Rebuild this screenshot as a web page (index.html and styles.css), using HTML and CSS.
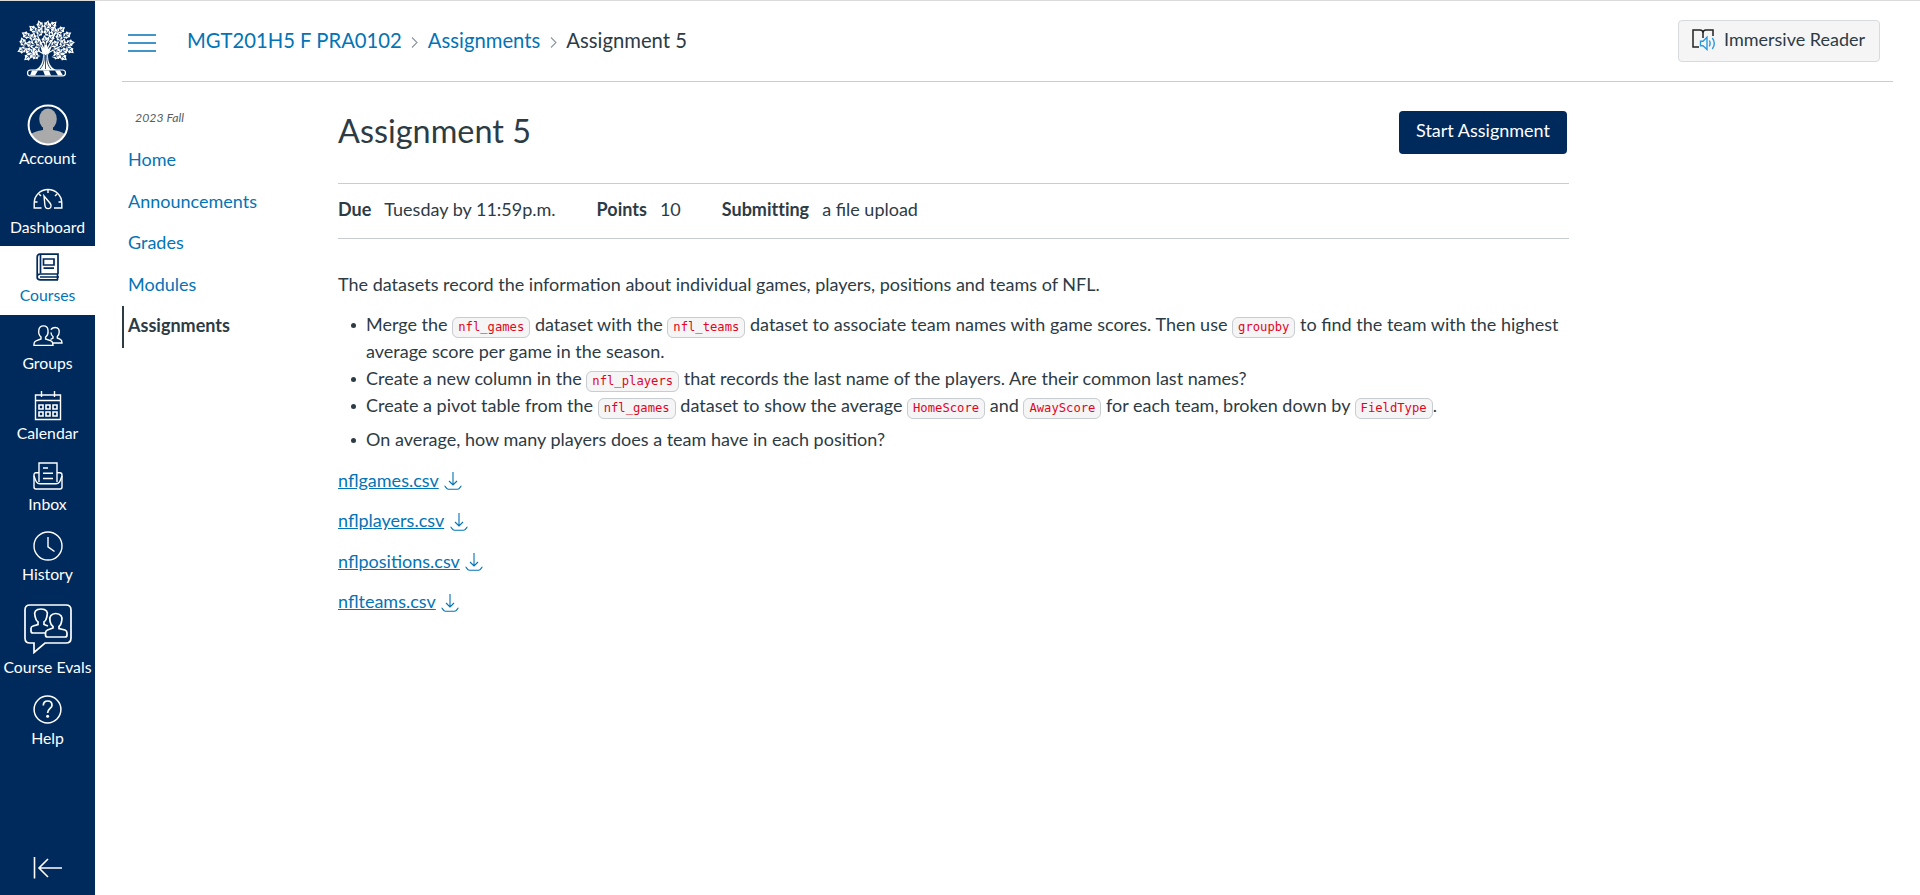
FILE: index.html
```html
<!DOCTYPE html>
<html lang="en">
<head>
<meta charset="utf-8">
<title>Assignment 5</title>
<link rel="stylesheet" href="styles.css">
</head>
<body>
<svg class="defs" width="0" height="0">
  <defs>
    <g id="leaf"><path d="M0 5.5 L-1.6 3 L-3.2 2.5 L-2.6 .3 L-3.4-1.6 L-1.6-2.4 L0-5 L1.7-2.4 L3.4-1.5 L2.6 .4 L3.2 2.5 L1.6 3Z" fill="#fff"/><path d="M0 5V-2.5M0 2L-1.7 .2M0 2L1.7 .2" stroke="#002a5c" stroke-width=".7" fill="none"/></g>
    <symbol id="download" viewBox="0 0 18 18"><path d="M9 0V13M5 9L9 13L13 9M.5 14C1.6 14 2 17.3 4.5 17.3H13.5C16 17.3 16.4 14 17.5 14" fill="none" stroke="currentColor" stroke-width="1.1"/></symbol>
  </defs>
</svg>
<div class="app">
  <nav class="rail">
    <a class="logo"><svg width="58" height="58" viewBox="0 0 58 58">
      <path d="M23 26L26 36C26 43 24 48 18 51H39C33 48 31 43 31 36L36 25L31 30L28 18L27 30Z" fill="#fff"/>
      <path d="M27 35C28 42 26 47 23 50M30 34C29 42 31 47 34 50M28.5 36V50" fill="none" stroke="#002a5c" stroke-width=".8"/>
      <path d="M27 35L14 28M29 35L44 27M27 30L20 16M30 30L38 15" stroke="#fff" stroke-width="1.3"/>
      <use href="#leaf" transform="translate(23 6)rotate(-20)"/><use href="#leaf" transform="translate(30 6)rotate(15)"/><use href="#leaf" transform="translate(36 6)rotate(45)"/>
      <use href="#leaf" transform="translate(16 10)rotate(-50)"/><use href="#leaf" transform="translate(23 13)rotate(25)"/><use href="#leaf" transform="translate(30 13)rotate(-30)"/><use href="#leaf" transform="translate(37 12)rotate(10)"/><use href="#leaf" transform="translate(44 11)rotate(55)"/>
      <use href="#leaf" transform="translate(9 16)rotate(-60)"/><use href="#leaf" transform="translate(16 18)rotate(15)"/><use href="#leaf" transform="translate(28 21)rotate(-10)"/><use href="#leaf" transform="translate(34 19)rotate(35)"/><use href="#leaf" transform="translate(42 18)rotate(-20)"/><use href="#leaf" transform="translate(50 16)rotate(60)"/>
      <use href="#leaf" transform="translate(6 23)rotate(-20)"/><use href="#leaf" transform="translate(13 25)rotate(-80)"/><use href="#leaf" transform="translate(21 23)rotate(-30)"/><use href="#leaf" transform="translate(38 25)rotate(60)"/><use href="#leaf" transform="translate(46 24)rotate(20)"/><use href="#leaf" transform="translate(53 24)rotate(80)"/>
      <use href="#leaf" transform="translate(5 31)rotate(-110)"/><use href="#leaf" transform="translate(12 32)rotate(-60)"/><use href="#leaf" transform="translate(19 31)rotate(-130)"/><use href="#leaf" transform="translate(40 32)rotate(110)"/><use href="#leaf" transform="translate(47 32)rotate(60)"/><use href="#leaf" transform="translate(53 31)rotate(130)"/>
      <use href="#leaf" transform="translate(11 38)rotate(-130)"/><use href="#leaf" transform="translate(18 37)rotate(-90)"/><use href="#leaf" transform="translate(40 37)rotate(80)"/><use href="#leaf" transform="translate(46 38)rotate(130)"/>
      <rect x="10.5" y="51" width="38" height="6" rx="3" fill="#002a5c" stroke="#fff" stroke-width="1.2"/>
      <path d="M15 51.5L21 51.5L18 56.5L13 56.5ZM26 51.5H32L34 56.5H28ZM38 51.5H43L46 56.5H41Z" fill="#fff"/>
    </svg></a>
    <a class="item account"><span class="icon"><svg width="42" height="42" viewBox="0 0 42 42"><defs><clipPath id="face"><circle cx="21" cy="21" r="19"/></clipPath></defs><circle cx="21" cy="21" r="19.5" fill="#002a5c"/><g clip-path="url(#face)" fill="#aaa"><ellipse cx="21" cy="15" rx="8.8" ry="10.5"/><path d="M16 22H26V26C33 27 39 29 40 34V42H2V34C3 29 9 27 16 26Z"/></g><circle cx="21" cy="21" r="19.4" fill="none" stroke="#fff" stroke-width="2"/></svg></span><span class="label">Account</span></a>
    <a class="item dashboard"><span class="icon"><svg width="30" height="22" viewBox="0 0 30 22"><g fill="none" stroke="#fff" stroke-width="1.4"><path d="M8.5 20H1.2V15A13.8 13.5 0 0 1 28.8 15V20H21"/><path d="M15 2V5M6 6L8 8M24 6L22 8M2 14H4.5M25.5 14H28"/><path d="M11 8L17.3 15.5C19 18 17.8 20.5 15.2 20.6C12.8 20.6 12 19 11.9 17Z"/></g></svg></span><span class="label">Dashboard</span></a>
    <a class="item active"><span class="icon"><svg width="24" height="28" viewBox="0 0 24 28"><g fill="none" stroke="#002a5c" stroke-width="1.7"><path d="M22 21H4.5C0 21 0 26.8 4.5 26.8H22M22 21V1.2H4C2 1.2 1.2 2.5 1.2 4V24"/><path d="M4.5 2V20.5M7.5 6H18V12H7.5ZM7.5 15.2H18M4 24H23M21.5 21V27"/></g></svg></span><span class="label">Courses</span></a>
    <a class="item raised"><span class="icon"><svg width="30" height="22" viewBox="0 0 30 22"><g fill="none" stroke="#fff" stroke-width="1.4"><path d="M8 12C5.5 10 5.5 7 5.8 5.2C6.2 2 8 .9 10.5.9S14.8 2 15 5.2C15.3 8 15 10.3 12.6 12V14L18 15.8C19.8 16.5 20 17.6 20 20.4H1V19C1 17 1.5 16.3 3 15.8L8 14Z"/><path d="M18 4.8C18.8 2.8 20.5 2.5 22.2 2.5C25.5 2.5 26.3 4.5 26.2 7C26.2 9 25.8 10.3 24.3 11.5V13L27.3 14.3C29 15 29 16 29 18H20M18 7.5C18.1 9.5 18.5 10.5 20 11.5V13L17.5 14.5"/></g></svg></span><span class="label">Groups</span></a>
    <a class="item raised"><span class="icon"><svg width="28" height="30" viewBox="0 0 28 30"><g fill="none" stroke="#fff" stroke-width="1.4"><path d="M1.5 4H26.5V28.5H1.5ZM1.5 9.5H26.5M7.5 0V6M20.5 0V6"/><path d="M5 14H9V18H5ZM12 14H16V18H12ZM19 14H23V18H19ZM5 21H9V25H5ZM12 21H16V25H12ZM19 21H23V25H19Z" stroke-width="1.6"/></g></svg></span><span class="label">Calendar</span></a>
    <a class="item"><span class="icon"><svg width="30" height="28" viewBox="0 0 30 28"><g fill="none" stroke="#fff" stroke-width="1.4"><path d="M6 10.8H3C1.5 10.8 1 11.5 1 13V25C1 26.5 1.6 27 3 27H27C28.4 27 29 26.5 29 25V13C29 11.5 28.5 10.8 27 10.8H24"/><path d="M6 20V1H24V20M1 14C3 20 4 21.8 7 21.8H23C26 21.8 27 20 29 14M10 6H15M10 11.2H20M10 16.5H20"/></g></svg></span><span class="label">Inbox</span></a>
    <a class="item"><span class="icon"><svg width="30" height="30" viewBox="0 0 30 30"><g fill="none" stroke="#fff" stroke-width="1.4"><circle cx="15" cy="15" r="14"/><path d="M15 6V15.8L21.5 20.5"/></g></svg></span><span class="label">History</span></a>
    <a class="item evals"><span class="icon"><svg width="48" height="50" viewBox="0 0 48 50"><g fill="none" stroke="#fff" stroke-width="1.7"><path d="M6 1H42Q47 1 47 6V34Q47 39 42 39H21L10 48.5V39H6Q1 39 1 34V6Q1 1 6 1Z"/><path d="M21.5 29H9Q7 29 7 27V24.5Q7 22.5 9 22L14 20.5V18C11 16 11.5 13 11 12C9.7 8 11.6 5 17 5S24.3 8 23 12C22.5 13 23 16 20 18V20.5L24 22"/><path d="M29 24V22.5C26 20.5 26.5 18 26 17C25 13 27 9.5 31.8 9.5S39 13 37.7 17C37 18 38 20.5 35 22.5V24.5L41 26Q43 26.7 43 29V31Q43 33 41 33H23.5Q21.5 33 21.5 31V29Q21.5 26.7 23.5 26Z"/></g></svg></span><span class="label">Course Evals</span></a>
    <a class="item"><span class="icon"><svg width="30" height="30" viewBox="0 0 30 30"><g fill="none" stroke="#fff"><circle cx="14.5" cy="14.5" r="13.4" stroke-width="1.5"/><path d="M10.3 10.5C10.3 7.5 12 6 14.7 6S19 7.5 19 10.2C19 13.5 14.6 13.5 14.6 18" stroke-width="1.7"/></g><circle cx="14.6" cy="21.2" r="1.5" fill="#fff"/></svg></span><span class="label">Help</span></a>
    <a class="collapse"><svg width="30" height="22" viewBox="0 0 30 22"><path d="M1.5 0V21.5M29 11H6M15 2L6 11L15 20" fill="none" stroke="#fff" stroke-width="1.6"/></svg></a>
  </nav>
  <div class="page">
    <header class="topbar">
      <svg class="burger" width="28" height="18" viewBox="0 0 28 18"><path d="M0 1H28M0 9H28M0 17H28" stroke="#0374b5" stroke-width="1.5"/></svg>
      <div class="crumbs"><a>MGT201H5 F PRA0102</a><svg width="7" height="11" viewBox="0 0 7 11"><path d="M1 .5L6 5.5L1 10.5" fill="none" stroke="#8b969e" stroke-width="1.1"/></svg><a>Assignments</a><svg width="7" height="11" viewBox="0 0 7 11"><path d="M1 .5L6 5.5L1 10.5" fill="none" stroke="#8b969e" stroke-width="1.1"/></svg><span>Assignment 5</span></div>
      <button class="reader"><svg width="24" height="22" viewBox="0 0 24 22"><path d="M7 18H1V1H8Q11 1 11 4V9M11 4Q11 1 14 1H21V7" fill="none" stroke="#222" stroke-width="1.5"/><path d="M8.5 12.2H11L15 8.2V20.5L11 16.8H8.5ZM17.3 11.5Q19 14.2 17.3 17.3M20.3 9Q24.3 14.3 20.3 20" fill="none" stroke="#2b9be0" stroke-width="1.4"/></svg>Immersive Reader</button>
    </header>
    <div class="columns">
      <nav class="course">
        <span class="term">2023 Fall</span>
        <a>Home</a><a>Announcements</a><a>Grades</a><a>Modules</a><a class="current">Assignments</a>
      </nav>
      <main>
        <div class="titlebar"><h1>Assignment 5</h1><button class="start">Start Assignment</button></div>
        <div class="facts"><div><b>Due</b>Tuesday by 11:59p.m.</div><div><b>Points</b>10</div><div><b>Submitting</b>a file upload</div></div>
        <div class="description">
          <p>The datasets record the information about individual games, players, positions and teams of NFL.</p>
          <ul>
            <li>Merge the <code>nfl_games</code> dataset with the <code>nfl_teams</code> dataset to associate team names with game scores. Then use <code>groupby</code> to find the team with the highest average score per game in the season.</li>
            <li>Create a new column in the <code>nfl_players</code> that records the last name of the players. Are their common last names?</li>
            <li>Create a pivot table from the <code>nfl_games</code> dataset to show the average <code>HomeScore</code> and <code>AwayScore</code> for each team, broken down by <code>FieldType</code>.</li>
            <li class="spaced">On average, how many players does a team have in each position?</li>
          </ul>
          <div class="files">
            <div><a>nflgames.csv</a><svg><use href="#download"/></svg></div>
            <div><a>nflplayers.csv</a><svg><use href="#download"/></svg></div>
            <div><a>nflpositions.csv</a><svg><use href="#download"/></svg></div>
            <div><a>nflteams.csv</a><svg><use href="#download"/></svg></div>
          </div>
        </div>
      </main>
    </div>
  </div>
</div>
</body>
</html>
```
FILE: styles.css
```css
* { box-sizing: border-box; }
body { margin: 0; background: #fff; color: #2d3b45; font: 18px/27px Lato, sans-serif; }
.defs { display: block; }
.app { display: flex; height: 895px; border-top: 1px solid #dadada; }
svg { flex: none; }
button { font: inherit; }

.rail { width: 95px; background: #002a5c; display: flex; flex-direction: column; flex: none; }
.logo { height: 97px; padding: 18px 0 0 17px; }
.item { height: 70px; padding-top: 6px; display: flex; flex-direction: column; align-items: center; color: #fff; flex: none; }
.icon { height: 30px; display: flex; align-items: center; }
.label { font-size: 15.75px; line-height: 24px; margin-top: 1px; white-space: nowrap; }
.account { height: 79px; padding-top: 6px; }
.account .icon { height: 42px; }
.account .label, .raised .label { margin-top: 0; }
.dashboard { height: 69px; padding-top: 7px; }
.active { height: 69px; background: #fff; color: #0374b5; }
.evals { height: 94px; padding-top: 9px; }
.evals .icon { height: 50px; }
.evals .label { margin-top: 1px; }
.collapse { margin: auto 0 16px 33px; height: 22px; }

.page { flex: 1; min-width: 0; padding: 0 27px; }
.topbar { height: 81px; border-bottom: 1px solid #c7cdd1; display: flex; align-items: flex-start; padding: 19px 13px 0 6px; }
.burger { margin-top: 13.5px; }
.crumbs { display: flex; align-items: center; margin: 7px auto 0 31px; font-size: 20.25px; line-height: 27px; white-space: nowrap; }
.crumbs svg { margin: 3px 9.5px 0; }
.crumbs a, .course a, .files div { color: #0374b5; }
.reader { height: 42px; width: 202px; display: flex; align-items: center; gap: 8px; padding: 0 0 3px 13px; background: #f5f5f5; border: 1px solid #d8dbdd; border-radius: 4px; color: #2d3b45; white-space: nowrap; }

.columns { display: flex; }
.course { width: 216px; display: flex; flex-direction: column; padding-top: 25px; }
.term { font-size: 12.3px; font-style: italic; line-height: 22px; padding-left: 13px; margin-bottom: 11px; color: #55606a; }
.course a { height: 41.5px; line-height: 38px; padding-left: 6px; }
.course .current { color: #2d3b45; font-weight: bold; border-left: 2px solid #2d3b45; padding-left: 4px; }

main { width: 1231px; }
.titlebar { display: flex; justify-content: space-between; padding: 29px 2px 29px 0; }
h1 { margin: 0; font-size: 32.4px; font-weight: normal; line-height: 39px; }
.start { width: 168px; height: 43px; padding: 0 0 4px; border: 0; border-radius: 4px; background: #002a5c; color: #fff; white-space: nowrap; }
.facts { height: 56px; border: solid #c7cdd1; border-width: 1px 0; display: flex; gap: 41px; padding-top: 12px; }
.facts b { margin-right: 13px; font-variant-ligatures: none; }
.description { padding-top: 32px; }
p { margin: 0 0 13px; }
ul { margin: 0 0 14px; padding-left: 28px; list-style: none; }
li::before { content: ""; display: inline-block; width: 5px; height: 5px; margin: 0 10px 0 -15px; border-radius: 50%; background: #2d3b45; vertical-align: 3px; }
.spaced { margin-top: 7px; }
code { padding: 2px 5px 3px; border: 1px solid #c7cdd1; border-radius: 6px; background: #f5f5f5; color: #e0061f; font-family: "DejaVu Sans Mono", monospace; font-size: 12.2px; line-height: 1; }
.files div { display: flex; align-items: center; height: 40.5px; line-height: 27px; }
.files { margin-top: -7px; }
.files a { text-decoration: underline; }
.files svg { width: 18px; height: 18px; margin: 2px 0 0 5.5px; }
```
